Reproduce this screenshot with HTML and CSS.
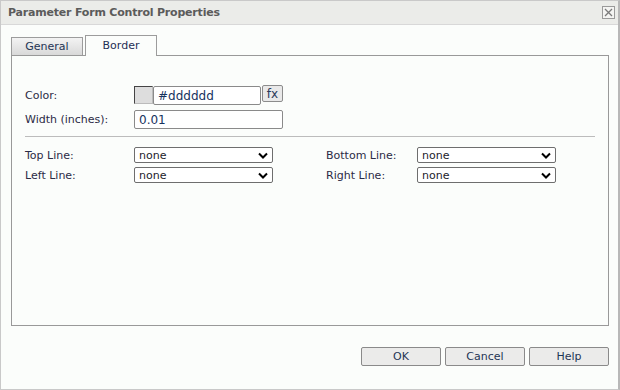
FILE: index.html
```html
<!DOCTYPE html>
<html lang="en">

<head>
    <meta charset="UTF-8">
    <title>Parameter Form Control Properties</title>
    <link rel="stylesheet" href="styles.css">
</head>

<body>
    <div class="dialog">
        <header class="titlebar">
            <h1>Parameter Form Control Properties</h1>
            <button class="close" type="button" title="Close">
                <svg width="9" height="9" viewBox="0 0 9 9">
                    <path d="M1 1 L8 8 M8 1 L1 8" stroke="#7a7a7a" stroke-width="1.3" fill="none" />
                </svg>
            </button>
        </header>

        <main class="content">
            <ul class="tabs">
                <li class="tab">General</li>
                <li class="tab active">Border</li>
            </ul>

            <section class="panel">
                <div class="form-grid">
                    <label for="ColorInput">Color:</label>
                    <div class="color-field">
                        <span class="swatch"></span>
                        <input type="text" id="ColorInput" class="text-input color-input" value="#dddddd">
                        <button type="button" class="fx">fx</button>
                    </div>
                    <label for="WidthInput">Width (inches):</label>
                    <input type="text" id="WidthInput" class="text-input width-input" value="0.01">
                </div>

                <hr>

                <div class="lines-grid">
                    <label for="TopLine">Top Line:</label>
                    <select id="TopLine"><option>none</option></select>
                    <label for="BottomLine">Bottom Line:</label>
                    <select id="BottomLine"><option>none</option></select>
                    <label for="LeftLine">Left Line:</label>
                    <select id="LeftLine"><option>none</option></select>
                    <label for="RightLine">Right Line:</label>
                    <select id="RightLine"><option>none</option></select>
                </div>
            </section>
        </main>

        <footer class="buttons">
            <button type="button">OK</button>
            <button type="button">Cancel</button>
            <button type="button">Help</button>
        </footer>
    </div>
</body>

</html>
```

FILE: styles.css
```css
* {
    margin: 0;
    padding: 0;
    box-sizing: border-box;
    list-style-type: none;
}

body {
    width: 620px;
    height: 390px;
    font-family: "DejaVu Sans", Verdana, sans-serif;
    font-size: 11px;
    color: #2b2b45;
    background-color: #fff;
}

.dialog {
    display: flex;
    flex-direction: column;
    width: 620px;
    height: 390px;
    border: 1px solid #c9c9c9;
    border-right: 2px solid #b8b8b8;
    background-color: #fbfdfb;
}

.titlebar {
    display: flex;
    justify-content: space-between;
    align-items: center;
    height: 24px;
    padding: 0 3px 0 7px;
    background-color: #ebece9;
    border-bottom: 1px solid #d8d8d8;
}

.titlebar h1 {
    font-size: 11px;
    font-weight: bold;
    color: #5b5b5b;
    letter-spacing: -0.2px;
}

.close {
    display: flex;
    align-items: center;
    justify-content: center;
    width: 13px;
    height: 13px;
    border: 1px solid #9a9a9a;
    background-color: #f4f4f2;
}

.content {
    padding: 10px 9px 0 10px;
}

.tabs {
    display: flex;
    align-items: flex-end;
    gap: 2px;
    height: 20px;
}

.tab {
    width: 72px;
    height: 18px;
    border: 1px solid #9c9c9c;
    border-bottom: none;
    text-align: center;
    line-height: 17px;
    background: linear-gradient(#f3f3f3, #d9d9d9);
    color: #1f3555;
}

.tab.active {
    height: 21px;
    line-height: 20px;
    margin-bottom: -1px;
    position: relative;
    background: #fbfdfb;
    color: #1f2f55;
}

.panel {
    height: 271px;
    border: 1px solid #999;
    padding: 29px 13px 0 13px;
}

.form-grid {
    display: grid;
    grid-template-columns: 109px auto;
    row-gap: 5px;
    align-items: center;
}

.color-field {
    display: flex;
    align-items: flex-start;
}

.swatch {
    width: 19px;
    height: 18px;
    margin-top: 1px;
    background-color: #dddddd;
    border-top: 1px solid #444;
    border-left: 1px solid #444;
    border-right: 1px solid #bbb;
    border-bottom: 1px solid #bbb;
}

.text-input {
    height: 19px;
    border: 1px solid #8a8a8a;
    border-radius: 2px;
    padding: 0 4px;
    font-family: inherit;
    font-size: 12px;
    color: #17335e;
    background-color: #fff;
}

.color-input {
    width: 108px;
    margin-top: 1px;
}

.width-input {
    width: 149px;
}

.fx {
    width: 21px;
    height: 17px;
    margin-left: 1px;
    border: 1px solid #8c8c8c;
    border-radius: 2px;
    background-color: #e9e9e9;
    font-family: inherit;
    font-size: 12px;
    color: #2b3a5a;
}

hr {
    margin: 7px 0 10px 0;
    border: none;
    border-top: 1px solid #bcbcbc;
}

.lines-grid {
    display: grid;
    grid-template-columns: 109px 139px 53px 91px 139px;
    row-gap: 4px;
    align-items: center;
}

.lines-grid label:nth-of-type(even) {
    grid-column: 4;
}

.lines-grid select:nth-of-type(even) {
    grid-column: 5;
}

select {
    appearance: none;
    width: 139px;
    height: 16px;
    border: 1px solid #6e6e6e;
    border-radius: 2px;
    padding: 0 4px;
    font-family: inherit;
    font-size: 11px;
    color: #1b1b2b;
    background: #fff url("data:image/svg+xml;utf8,<svg xmlns='http://www.w3.org/2000/svg' width='10' height='7' viewBox='0 0 10 7'><path d='M1 1.5 L5 5.5 L9 1.5' stroke='black' stroke-width='2' fill='none'/></svg>") no-repeat right 4px center;
}

.buttons {
    display: flex;
    justify-content: flex-end;
    gap: 4px;
    padding: 21px 9px 0 0;
}

.buttons button {
    width: 80px;
    height: 19px;
    border: 1px solid #8a8a8a;
    border-radius: 2px;
    background-color: #ebebea;
    font-family: inherit;
    font-size: 11px;
    color: #1f3555;
}
```
